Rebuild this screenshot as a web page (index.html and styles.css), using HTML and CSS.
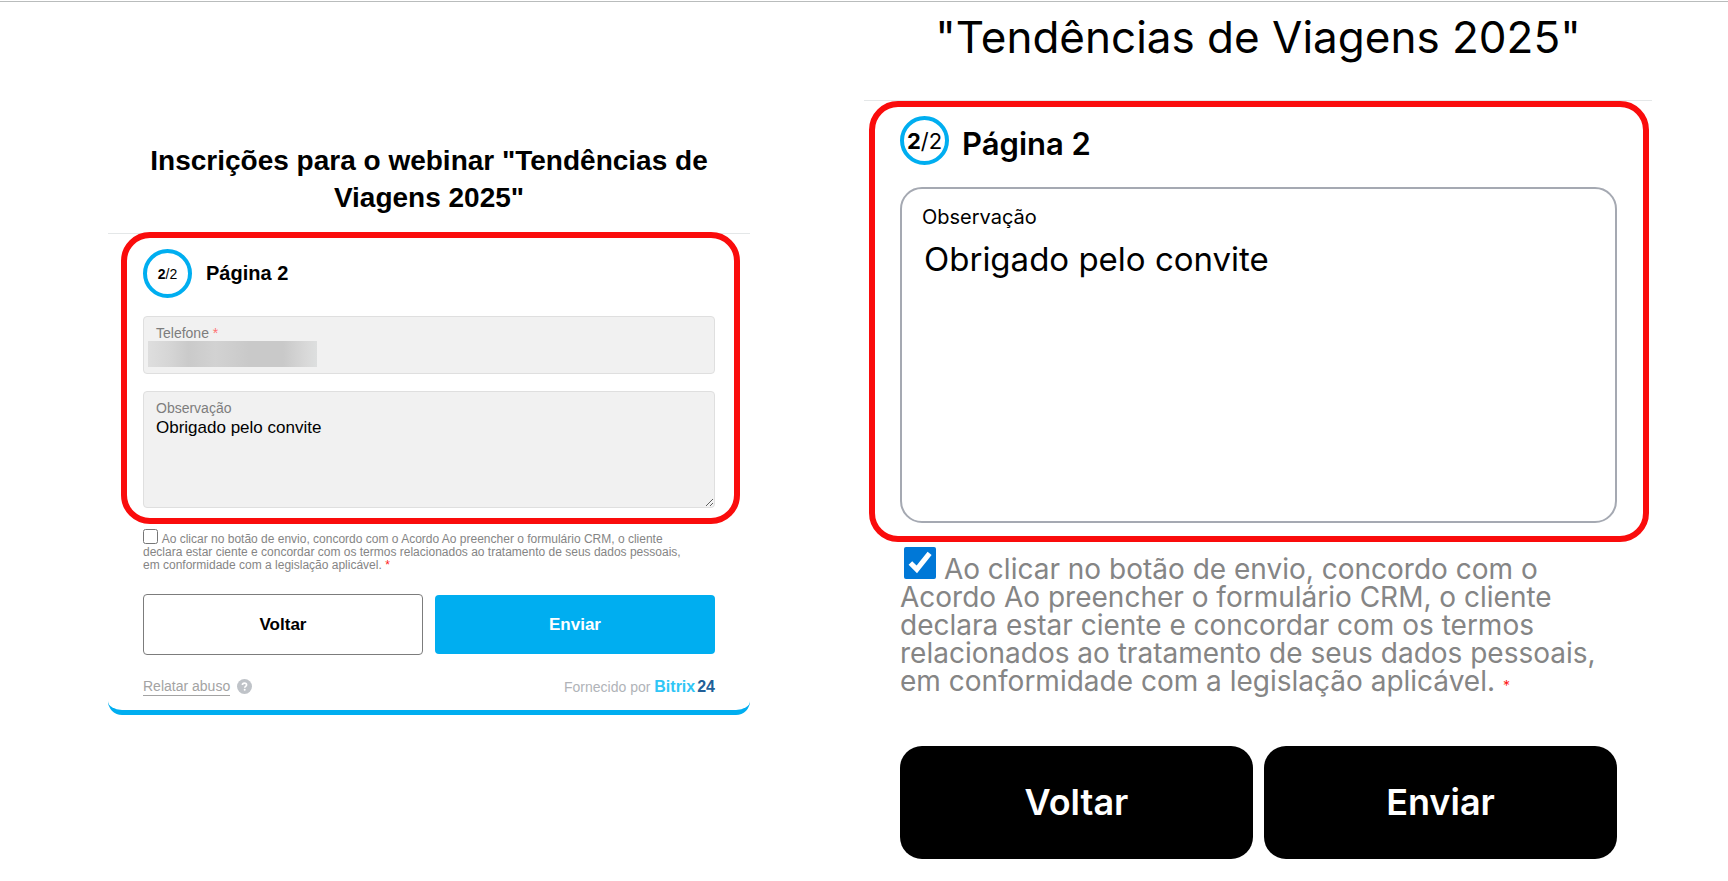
FILE: index.html
```html
<!DOCTYPE html>
<html lang="pt-BR">
<head>
<meta charset="utf-8">
<title>Inscrições para o webinar</title>
<link rel="stylesheet" href="styles.css">
</head>
<body>
<main class="compare">
  <form class="form form-classic">
    <h1 class="form-title">Inscrições para o webinar "Tendências de Viagens 2025"</h1>
    <div class="form-body">
      <section class="highlight">
        <div class="step">
          <span class="step-badge"><span><b>2</b>/2</span></span>
          <h2 class="step-name">Página 2</h2>
        </div>
        <div class="field field-phone">
          <label class="field-label" for="phone">Telefone <span class="required">*</span></label>
          <input class="field-input" id="phone" type="tel">
          <span class="redaction"></span>
        </div>
        <div class="field field-note">
          <label class="field-label" for="note">Observação</label>
          <textarea class="field-input" id="note">Obrigado pelo convite</textarea>
        </div>
      </section>
      <div class="consent">
        <input class="consent-box" type="checkbox" id="agree">
        <label for="agree">Ao clicar no botão de envio, concordo com o Acordo Ao preencher o formulário CRM, o cliente declara estar ciente e concordar com os termos relacionados ao tratamento de seus dados pessoais, em conformidade com a legislação aplicável. <span class="required-mark">*</span></label>
      </div>
      <div class="actions">
        <button class="button button-back" type="button">Voltar</button>
        <button class="button button-send" type="button">Enviar</button>
      </div>
      <footer class="footer">
        <a class="report" href="#">Relatar abuso</a>
        <svg class="help" viewBox="0 0 15 15" role="img" aria-label="Ajuda"><circle cx="7.5" cy="7.5" r="7.5" fill="#bfc3c8"/><path d="M5.4 6.1C5.4 4.8 6.3 4.1 7.5 4.1s2.1.7 2.1 1.8c0 1.4-1.9 1.4-1.9 2.8" fill="none" stroke="#fff" stroke-width="1.6"/><circle cx="7.7" cy="10.7" r="1" fill="#fff"/></svg>
        <span class="powered">Fornecido por <a class="brand" href="#"><span class="brand-name">Bitrix</span><span class="brand-number">24</span></a></span>
      </footer>
    </div>
  </form>

  <form class="form form-modern">
    <h1 class="form-title">"Tendências de Viagens 2025"</h1>
    <div class="form-body">
      <section class="highlight">
        <div class="step">
          <span class="step-badge"><span><b>2</b>/2</span></span>
          <h2 class="step-name">Página 2</h2>
        </div>
        <div class="field field-note">
          <label class="field-label" for="note-modern">Observação</label>
          <textarea class="field-input" id="note-modern">Obrigado pelo convite</textarea>
        </div>
      </section>
      <div class="consent">
        <input class="consent-box" type="checkbox" id="agree-modern" checked>
        <label for="agree-modern">Ao clicar no botão de envio, concordo com o Acordo Ao preencher o formulário CRM, o cliente declara estar ciente e concordar com os termos relacionados ao tratamento de seus dados pessoais, em conformidade com a legislação aplicável. <span class="required-mark">*</span></label>
      </div>
      <div class="actions">
        <button class="button" type="button">Voltar</button>
        <button class="button" type="button">Enviar</button>
      </div>
    </div>
  </form>
</main>
</body>
</html>
```
FILE: styles.css
```css
* { box-sizing: border-box; }

body {
  margin: 0;
  padding-top: 1px;
  background: #fff;
  color: #000;
}

.compare {
  display: grid;
  grid-template-columns: 1fr 1fr;
  align-items: start;
  border-top: 1px solid #b9bcbc;
}

h1, h2 { margin: 0; }

.form-title { text-align: center; }

.form-body { border-top: 1px solid #e4e7e8; }

.highlight {
  border: 6px solid #fa0c0c;
  border-radius: 29px;
}

.step {
  display: flex;
  align-items: center;
}

.step-badge {
  display: flex;
  align-items: center;
  justify-content: center;
  flex: none;
  width: 49px;
  height: 49px;
  border: 4px solid #00aef0;
  border-radius: 50%;
  white-space: nowrap;
}

.field {
  display: flex;
  flex-direction: column;
  position: relative;
}

.field-input {
  display: block;
  width: 100%;
  margin: 0;
  border: 0;
  outline: 0;
  background: transparent;
  color: #000;
  font: inherit;
}

.consent { color: #858585; }

.required-mark { color: #ff1a1a; }

.actions {
  display: grid;
  grid-template-columns: 1fr 1fr;
  align-items: center;
}

.button {
  border: 0;
  font-family: inherit;
}

/* Classic theme */

.form-classic {
  padding: 140px 114px 0 108px;
  font-family: "Liberation Sans", Arial, sans-serif;
}

.form-classic .form-title {
  padding-bottom: 17px;
  font-size: 28px;
  line-height: 37px;
}

.form-classic .form-body {
  padding-bottom: 14px;
  border-bottom: 5px solid #00aef0;
  border-radius: 0 0 14px 14px;
}

.form-classic .highlight {
  margin: -2px 10px 0 13px;
  padding: 11px 19px 10px 16px;
}

.form-classic .step {
  gap: 14px;
  margin-bottom: 18px;
}

.form-classic .step-badge { font-size: 14px; }

.form-classic .step-name { font-size: 20px; }

.form-classic .field {
  border: 1px solid #dfdfdf;
  border-radius: 4px;
  background: #f1f1f1;
}

.form-classic .field-label {
  padding: 7px 12px 0;
  color: #7d7d7d;
  font-size: 14px;
  line-height: 18px;
}

.required { color: #ff7373; }

.form-classic .field-phone {
  height: 58px;
  margin-bottom: 17px;
}

.form-classic .field-phone .field-input {
  height: 28px;
  padding: 0 12px;
}

.redaction {
  position: absolute;
  left: 4px;
  top: 24px;
  width: 169px;
  height: 26px;
  background: linear-gradient(90deg, #dedede 0, #d6d6d6 12%, #cacaca 24%, #d2d2d2 40%, #c9c9c9 60%, #c9c9c9 80%, #d9d9d9 94%, #dddfdf 100%);
}

.form-classic .field-note .field-input {
  height: 90px;
  padding: 1px 12px;
  font-size: 17px;
  line-height: 20px;
  resize: vertical;
}

.form-classic .consent {
  padding: 5px 57px 5px 35px;
  font-size: 12px;
  line-height: 13px;
}

.form-classic .consent-box {
  width: 15px;
  height: 15px;
  margin: 0 1px 0 0;
  vertical-align: -1px;
}

.form-classic .actions {
  gap: 12px;
  margin: 17px 35px 0;
}

.form-classic .button {
  border-radius: 4px;
  font-size: 17px;
  font-weight: 700;
}

.form-classic .button-back {
  height: 61px;
  border: 1px solid #7c7c7c;
  background: #fff;
}

.form-classic .button-send {
  height: 59px;
  background: #00aef0;
  color: #fff;
}

.footer {
  display: flex;
  align-items: center;
  margin: 22px 35px 0;
  font-size: 14px;
  line-height: 18px;
}

.report {
  border-bottom: 1px solid #a3a3a3;
  color: #a3a3a3;
  text-decoration: none;
}

.help {
  width: 15px;
  height: 15px;
  margin-left: 7px;
}

.powered {
  margin-left: auto;
  color: #b0b3b8;
}

.brand {
  font-size: 16px;
  font-weight: 700;
  text-decoration: none;
}

.brand-name { color: #2fc6f6; }

.brand-number {
  margin-left: 2px;
  color: #215f98;
}

/* Modern theme */

.form-modern {
  padding: 9px 76px 0 0;
  font-family: Inter, sans-serif;
}

.form-modern .form-title {
  padding-bottom: 37px;
  font-size: 44px;
  font-weight: 400;
  line-height: 52px;
}

.form-modern .highlight {
  margin: 0 3px 0 5px;
  padding: 9px 26px 13px 25px;
}

.form-modern .step {
  gap: 13px;
  margin-bottom: 22px;
}

.form-modern .step-badge { font-size: 22px; }

.form-modern .step-name {
  padding-top: 5px;
  font-size: 31px;
  font-weight: 600;
}

.form-modern .field {
  border: 2px solid #a5a9b2;
  border-radius: 22px;
}

.form-modern .field-label {
  padding: 16px 20px 0;
  font-size: 20px;
  line-height: 24px;
}

.form-modern .field-input {
  height: 292px;
  padding: 9px 22px;
  font-size: 33px;
  line-height: 42px;
  resize: none;
}

.form-modern .consent {
  padding: 5px 36px;
  font-size: 28px;
  line-height: 28px;
}

.form-modern .consent-box {
  width: 32px;
  height: 32px;
  margin: 0 0 0 4px;
  accent-color: #0078d7;
}

.form-modern .required-mark { font-size: 14px; }

.form-modern .actions {
  gap: 11px;
  margin: 41px 35px 0 36px;
}

.form-modern .button {
  height: 113px;
  padding-bottom: 3px;
  border-radius: 22px;
  background: #000;
  color: #fff;
  font-size: 36px;
  font-weight: 600;
}
```
